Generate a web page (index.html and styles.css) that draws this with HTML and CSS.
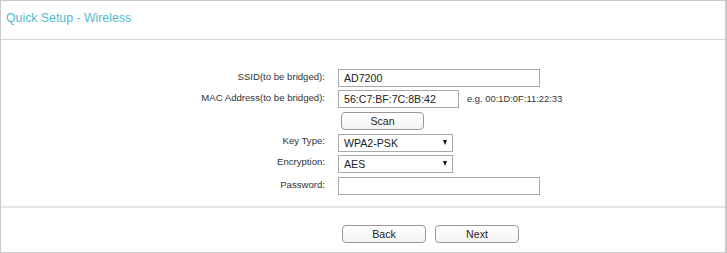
FILE: index.html
```html
<!DOCTYPE html>
<html>
<head>
<meta charset="utf-8">
<link rel="stylesheet" href="styles.css">
</head>
<body>
<div class="panel">
  <div class="header"><h1 class="title">Quick Setup - Wireless</h1></div>
  <div class="form">
    <div class="row r1">
      <label class="label">SSID(to be bridged):</label>
      <div class="field"><input class="text wide" type="text" value="AD7200"></div>
    </div>
    <div class="row r2">
      <label class="label">MAC Address(to be bridged):</label>
      <div class="field"><input class="text mac" type="text" value="56:C7:BF:7C:8B:42"><span class="hint">e.g. 00:1D:0F:11:22:33</span></div>
    </div>
    <div class="row r3">
      <span class="label"></span>
      <div class="field"><button class="btn scan">Scan</button></div>
    </div>
    <div class="row r4">
      <label class="label">Key Type:</label>
      <div class="field"><div class="select"><select><option>WPA2-PSK</option></select></div></div>
    </div>
    <div class="row r5">
      <label class="label">Encryption:</label>
      <div class="field"><div class="select"><select><option>AES</option></select></div></div>
    </div>
    <div class="row r6">
      <label class="label">Password:</label>
      <div class="field"><input class="text wide" type="password" value=""></div>
    </div>
  </div>
  <div class="footer">
    <button class="btn nav">Back</button>
    <button class="btn nav">Next</button>
  </div>
</div>
</body>
</html>
```
FILE: styles.css
```css
html, body {
  margin: 0;
  padding: 0;
  background: #fff;
}
body {
  font-family: "Liberation Sans", Arial, sans-serif;
  color: #333;
}
.panel {
  width: 727px;
  height: 253px;
  box-sizing: border-box;
  border: 1px solid #c9c9c9;
  border-right-width: 2px;
  display: flex;
  flex-direction: column;
}
.header {
  height: 38px;
  flex-shrink: 0;
  border-bottom: 1px solid #d6d6d6;
  display: flex;
  align-items: flex-start;
}
.title {
  margin: 0;
  padding: 10px 0 0 5px;
  font-size: 12.3px;
  font-weight: normal;
  color: #4fbbd0;
  line-height: 14px;
}
.form {
  padding-top: 28px;
  height: 168px;
  flex-shrink: 0;
  border-bottom: 2px solid #e6e6e6;
  box-sizing: border-box;
  display: flex;
  flex-direction: column;
}
.row {
  display: grid;
  grid-template-columns: 324px 1fr;
  column-gap: 13px;
  flex-shrink: 0;
}
.r1 { height: 21px; }
.r2 { height: 22px; }
.r3 { height: 21px; }
.r4 { height: 21px; }
.r5 { height: 23px; }
.r6 { height: 19px; }
.label {
  text-align: right;
  font-size: 9.6px;
  color: #333;
  line-height: 18px;
}
.field {
  display: flex;
  align-items: center;
  height: 19px;
}
.text {
  box-sizing: border-box;
  height: 18px;
  border: 1px solid #a8a8a8;
  padding: 0 5px;
  font-family: "Liberation Sans", Arial, sans-serif;
  font-size: 10.6px;
  color: #222;
  outline: none;
  margin: 0;
}
.wide { width: 202px; }
.mac { width: 121px; }
.hint {
  margin-left: 8px;
  font-size: 9.4px;
  color: #333;
}
.btn {
  box-sizing: border-box;
  height: 18px;
  border: 1px solid #999;
  border-radius: 4px;
  background: linear-gradient(#fff, #f3f3f3);
  font-family: "Liberation Sans", Arial, sans-serif;
  font-size: 10.6px;
  color: #222;
  padding: 0;
  margin: 0;
  line-height: 16px;
}
.scan {
  width: 83px;
  margin-left: 3px;
}
.select {
  position: relative;
  width: 115px;
  height: 18px;
}
.select select {
  appearance: none;
  -webkit-appearance: none;
  width: 115px;
  height: 18px;
  box-sizing: border-box;
  border: 1px solid #a8a8a8;
  border-radius: 0;
  background: #fff;
  padding: 0 0 0 5px;
  font-family: "Liberation Sans", Arial, sans-serif;
  font-size: 10.6px;
  color: #222;
  margin: 0;
}
.select::after {
  content: "";
  position: absolute;
  right: 6px;
  top: 7px;
  border-left: 2.5px solid transparent;
  border-right: 2.5px solid transparent;
  border-top: 5px solid #111;
  pointer-events: none;
}
.footer {
  flex: 1;
  display: flex;
  align-items: flex-start;
  padding: 17px 0 0 341px;
  gap: 9px;
}
.nav {
  width: 84px;
  height: 18px;
}
```
